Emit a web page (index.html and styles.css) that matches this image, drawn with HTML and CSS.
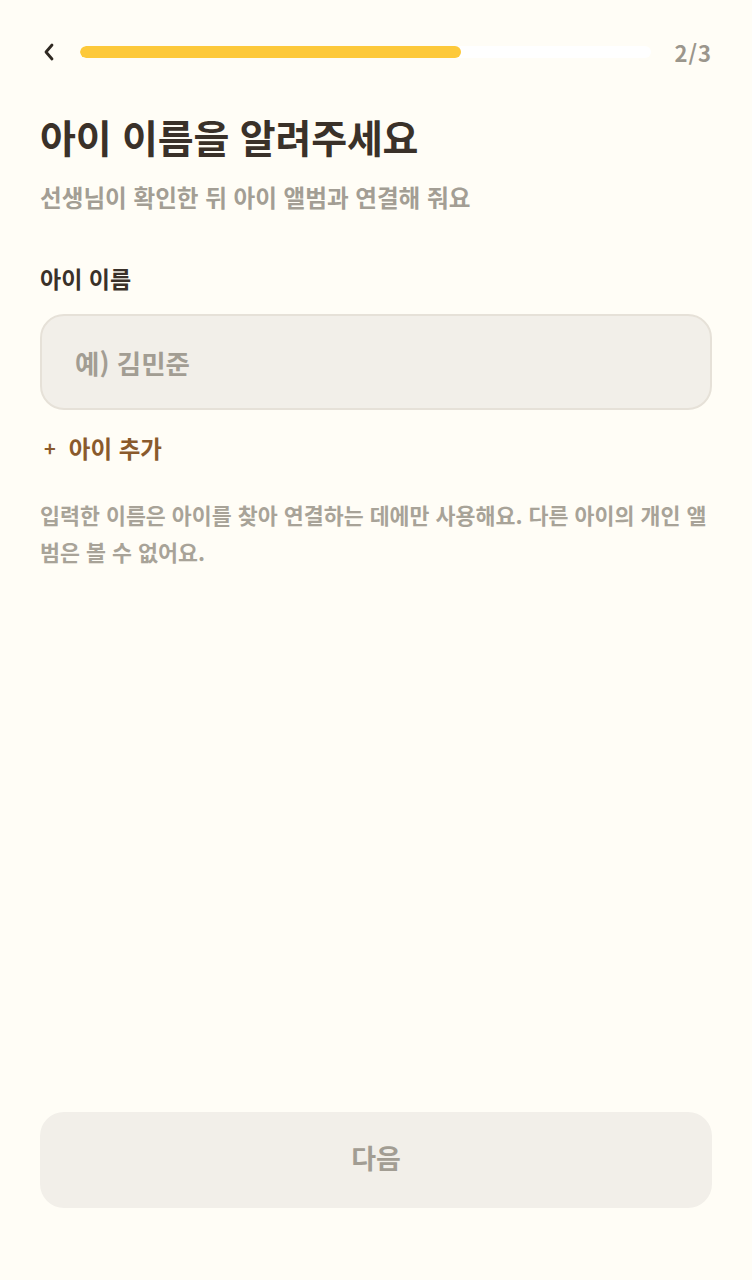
FILE: index.html
```html
<!DOCTYPE html>
<html lang="ko">
<head>
<meta charset="utf-8">
<title>아이 이름</title>
<link rel="stylesheet" href="styles.css">
</head>
<body>
<div class="page">
  <div class="topbar">
    <button class="back" aria-label="뒤로">
      <svg width="16" height="20" viewBox="0 0 16 20"><path d="M11 3 L5 10 L11 17" fill="none" stroke="#2f2922" stroke-width="2.8" stroke-linecap="round" stroke-linejoin="round"/></svg>
    </button>
    <div class="track"><div class="fill" style="width:66.67%"></div></div>
    <span class="step">2/3</span>
  </div>

  <h1 class="title">아이 이름을 알려주세요</h1>
  <p class="subtitle">선생님이 확인한 뒤 아이 앨범과 연결해 줘요</p>

  <label class="label" for="name">아이 이름</label>
  <input id="name" class="field" type="text" placeholder="예) 김민준">

  <button class="add"><span class="plus">+</span>아이 추가</button>

  <p class="info">입력한 이름은 아이를 찾아 연결하는 데에만 사용해요. 다른 아이의 개인 앨범은 볼 수 없어요.</p>

  <button class="next">다음</button>
</div>
</body>
</html>
```

FILE: styles.css
```css
html, body {
  margin: 0;
  padding: 0;
  background: #fffdf6;
}
body {
  font-family: "Noto Sans CJK KR", "Noto Sans", sans-serif;
}
.page {
  box-sizing: border-box;
  height: 1280px;
  padding: 32px 40px 72px;
  display: flex;
  flex-direction: column;
}
.topbar {
  height: 40px;
  display: flex;
  align-items: center;
}
.back {
  width: 24px;
  height: 40px;
  padding: 0 0 0 1px;
  border: 0;
  background: none;
  display: flex;
  align-items: center;
  margin-right: 16px;
}
.track {
  flex: 1;
  height: 12px;
  border-radius: 6px;
  background: #ffffff;
  overflow: hidden;
}
.fill {
  height: 100%;
  border-radius: 6px;
  background: #fdc93a;
}
.step {
  margin-left: 23px;
  font-size: 22px;
  font-weight: 700;
  color: #9b968c;
  line-height: 40px;
  letter-spacing: 1px;
}
.title {
  margin: 38px 0 0;
  font-size: 39px;
  line-height: 52px;
  font-weight: 700;
  color: #3a3129;
  letter-spacing: -0.2px;
}
.subtitle {
  margin: 19px 0 0;
  font-size: 23.6px;
  line-height: 32px;
  font-weight: 700;
  color: #a39e94;
}
.label {
  display: block;
  margin-top: 50px;
  font-size: 23px;
  line-height: 30px;
  font-weight: 700;
  color: #3a3129;
}
.field {
  box-sizing: border-box;
  display: block;
  width: 100%;
  height: 96px;
  margin-top: 21px;
  padding: 0 33px;
  border: 2px solid #e6e1d8;
  border-radius: 24px;
  background: #f2efe9;
  font-family: inherit;
  font-size: 26.5px;
  font-weight: 700;
  color: #3a3129;
  outline: none;
}
.field::placeholder {
  color: #a29d93;
}
.add {
  align-self: flex-start;
  margin-top: 22px;
  padding: 0 0 0 4px;
  border: 0;
  background: none;
  font-family: inherit;
  font-size: 23.5px;
  line-height: 32px;
  font-weight: 700;
  color: #8a5a2c;
  display: flex;
  align-items: center;
}
.plus {
  font-size: 20px;
  margin-right: 13px;
}
.info {
  margin: 32px 0 0;
  font-size: 21.7px;
  line-height: 37px;
  font-weight: 700;
  color: #a8a398;
}
.next {
  margin-top: auto;
  height: 96px;
  width: 100%;
  padding: 0 0 5px;
  border: 0;
  border-radius: 24px;
  background: #f2efe9;
  font-family: inherit;
  font-size: 27px;
  font-weight: 700;
  color: #a29d93;
}
```
